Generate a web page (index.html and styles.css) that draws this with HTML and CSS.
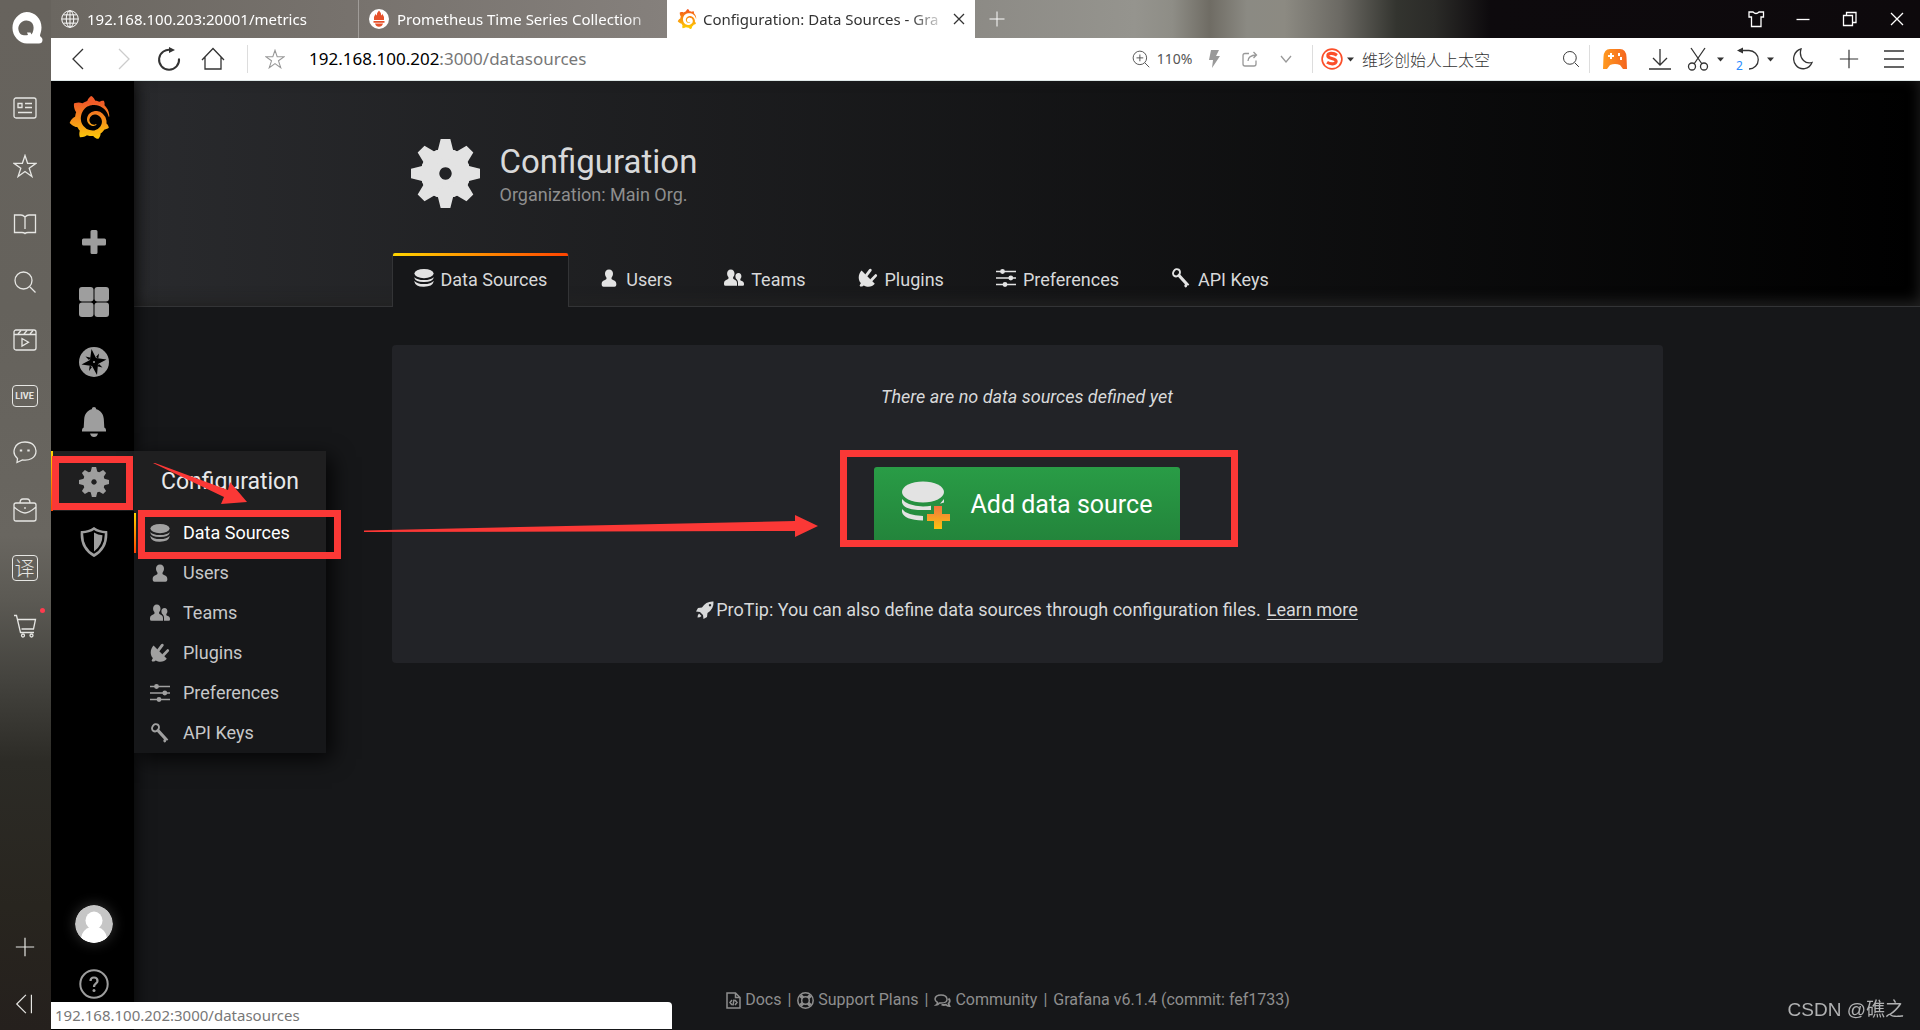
FILE: index.html
```html
<!DOCTYPE html>
<html lang="en">
<head>
<meta charset="utf-8">
<meta name="viewport" content="width=device-width, initial-scale=1">
<title>Configuration: Data Sources - Grafana</title>
<link rel="stylesheet" href="styles.css">
</head>
<body>
<svg class="sprite" aria-hidden="true">
  <defs>
    <linearGradient id="g-logo" x1="0" y1="0" x2="0" y2="1"><stop offset="0.15" stop-color="#f05a28"/><stop offset="1" stop-color="#fbca0a"/></linearGradient>
    <linearGradient id="g-plus" x1="0" y1="0" x2="0" y2="1"><stop offset="0" stop-color="#f2753f"/><stop offset="1" stop-color="#fbc20f"/></linearGradient>
    <linearGradient id="g-pad" x1="0" y1="0" x2="1" y2="0"><stop offset="0" stop-color="#ff9a1f"/><stop offset="1" stop-color="#f4651f"/></linearGradient>
    <path id="tooth" d="M43 0H57L61 16Q65 17 67 19L50 34L33 19Q35 17 39 16Z"/>
  </defs>
  <symbol id="logo" viewBox="0 0 24 24"><path d="M23.02 10.59a8.578 8.578 0 0 0-.862-3.034 8.911 8.911 0 0 0-1.789-2.445c.337-1.342-.413-2.505-.413-2.505-1.292-.08-2.113.4-2.416.62-.052-.02-.102-.044-.154-.064-.22-.089-.446-.172-.677-.247-.231-.073-.47-.14-.711-.197a9.867 9.867 0 0 0-.875-.161C14.557.753 12.94 0 12.94 0c-1.804 1.145-2.147 2.744-2.147 2.744l-.018.093c-.098.029-.2.057-.298.088-.138.042-.275.094-.413.143-.138.055-.275.107-.41.166a8.869 8.869 0 0 0-1.557.87l-.063-.029c-2.497-.955-4.716.195-4.716.195-.203 2.658.996 4.33 1.235 4.636a11.608 11.608 0 0 0-.607 2.635C1.636 12.677.953 15.014.953 15.014c1.926 2.214 4.171 2.351 4.171 2.351.003-.002.006-.002.006-.005.285.509.615.994.986 1.446.156.19.32.371.488.548-.704 2.009.099 3.68.099 3.68 2.144.08 3.553-.937 3.849-1.173a9.784 9.784 0 0 0 3.164.501h.08l.055-.003.107-.002.103-.005.003.002c1.01 1.44 2.788 1.646 2.788 1.646 1.264-1.332 1.337-2.653 1.337-2.94v-.058c0-.02-.003-.039-.003-.06.265-.187.52-.387.758-.6a7.875 7.875 0 0 0 1.415-1.7c1.43.083 2.437-.885 2.437-.885-.236-1.49-1.085-2.216-1.264-2.354l-.018-.013-.016-.013a.217.217 0 0 1-.031-.02c.008-.092.016-.18.02-.27.011-.162.016-.323.016-.48v-.253l-.005-.098-.008-.135a1.891 1.891 0 0 0-.01-.13c-.003-.042-.008-.083-.013-.125l-.016-.124-.018-.122a6.215 6.215 0 0 0-2.032-3.73 6.015 6.015 0 0 0-3.222-1.46 6.292 6.292 0 0 0-.85-.048l-.107.002h-.063l-.044.003-.104.008a4.777 4.777 0 0 0-3.335 1.695c-.332.4-.592.84-.768 1.297a4.594 4.594 0 0 0-.312 1.817l.003.091c.005.055.007.11.013.164a3.615 3.615 0 0 0 .698 1.82 3.53 3.53 0 0 0 1.827 1.282c.33.098.66.14.971.137.039 0 .078 0 .114-.002l.063-.003c.02 0 .041-.003.062-.003.034-.002.065-.007.099-.01.007 0 .018-.003.028-.003l.031-.005.06-.008a1.18 1.18 0 0 0 .112-.02c.036-.008.072-.013.109-.024a2.634 2.634 0 0 0 .914-.415c.028-.02.056-.041.085-.065a.248.248 0 0 0 .039-.35.244.244 0 0 0-.309-.06l-.078.042c-.09.044-.184.083-.283.116a2.476 2.476 0 0 1-.475.096c-.028.003-.054.006-.083.006l-.083.002c-.026 0-.054 0-.08-.002l-.102-.006h-.012l-.024.006c-.016-.003-.031-.003-.044-.006-.031-.002-.06-.007-.091-.01a2.59 2.59 0 0 1-.724-.213 2.557 2.557 0 0 1-.667-.438 2.52 2.52 0 0 1-.805-1.475 2.306 2.306 0 0 1-.029-.444l.006-.122v-.023l.002-.031c.003-.021.003-.04.005-.06a3.163 3.163 0 0 1 1.352-2.29 3.12 3.12 0 0 1 .937-.43 2.946 2.946 0 0 1 .776-.101h.06l.07.002.045.003h.026l.07.005a4.041 4.041 0 0 1 1.635.49 3.94 3.94 0 0 1 1.602 1.662 3.77 3.77 0 0 1 .397 1.414l.005.076.003.075c.002.026.002.05.002.075 0 .024.003.052 0 .07v.065l-.002.073-.008.174a6.195 6.195 0 0 1-.08.639 5.1 5.1 0 0 1-.267.927 5.31 5.31 0 0 1-.624 1.13 5.052 5.052 0 0 1-3.237 2.014 4.82 4.82 0 0 1-.649.066l-.039.003h-.287a6.607 6.607 0 0 1-1.716-.265 6.776 6.776 0 0 1-3.4-2.274 6.75 6.75 0 0 1-.746-1.15 6.616 6.616 0 0 1-.714-2.596l-.005-.083-.002-.02v-.056l-.003-.073v-.096l-.003-.104v-.07l.003-.163c.008-.22.026-.45.054-.678a8.707 8.707 0 0 1 .28-1.355c.128-.444.286-.872.473-1.277a7.04 7.04 0 0 1 1.456-2.1 5.925 5.925 0 0 1 .953-.763c.169-.111.343-.213.524-.306.089-.05.182-.091.273-.135.047-.02.093-.042.138-.062a7.177 7.177 0 0 1 .714-.267l.145-.045c.049-.015.098-.026.148-.041.098-.029.197-.052.296-.076.049-.013.1-.02.15-.033l.15-.032.151-.028.076-.013.075-.01.153-.024c.057-.01.114-.013.171-.023l.169-.021c.036-.003.073-.008.106-.01l.073-.008.036-.003.042-.002c.057-.003.114-.008.171-.01l.086-.006h.023l.037-.003.145-.007a7.999 7.999 0 0 1 1.708.125 7.917 7.917 0 0 1 2.048.68 8.253 8.253 0 0 1 1.672 1.09l.09.077.089.078c.06.052.114.107.171.159.057.052.112.106.166.16.052.055.107.107.159.164a8.671 8.671 0 0 1 1.41 1.978c.012.026.028.052.04.078l.04.078.075.156c.023.051.05.1.07.153l.065.15a8.848 8.848 0 0 1 .45 1.34.19.19 0 0 0 .201.142.186.186 0 0 0 .172-.184c.01-.246.002-.532-.024-.856z"/></symbol>
  <symbol id="gear" viewBox="0 0 100 100">
    <path fill-rule="evenodd" d="M50 14a36 36 0 1 0 .01 0ZM50 41a9 9 0 1 1-.01 0Z"/>
    <use href="#tooth"/><use href="#tooth" transform="rotate(45 50 50)"/><use href="#tooth" transform="rotate(90 50 50)"/><use href="#tooth" transform="rotate(135 50 50)"/><use href="#tooth" transform="rotate(180 50 50)"/><use href="#tooth" transform="rotate(225 50 50)"/><use href="#tooth" transform="rotate(270 50 50)"/><use href="#tooth" transform="rotate(315 50 50)"/>
  </symbol>
  <symbol id="db" viewBox="0 0 20 20"><ellipse cx="10" cy="5.6" rx="9.6" ry="4.6"/><path d="M.4 9.2Q3 12 10 12T19.600 9.200V10Q18.500 13.900 10 14T.400 10ZM.400 12.900Q3 16 10 16T19.600 12.900V13.800Q18.500 18.600 10 18.800T.400 13.800Z"/></symbol>
  <symbol id="user" viewBox="0 0 20 20"><path d="M10 1.500c2.600 0 4 1.900 4 4.300 0 1.600-.6 2.700-1.200 3.500-.4.600-.5 1.900.2 2.300 2 .9 4.300 1.600 4.300 4.300V17q0 1.800-1.800 1.800h-11Q2.700 18.800 2.700 17v-1.100c0-2.700 2.300-3.400 4.300-4.300.7-.4.600-1.700.2-2.300C6.600 8.500 6 7.400 6 5.800c0-2.400 1.400-4.300 4-4.300z"/></symbol>
  <symbol id="team" viewBox="0 0 20 20"><path d="M6.800 1.500c2.400 0 3.700 1.700 3.700 4 0 1.500-.5 2.600-1.100 3.300-.4.600-.5 1.800.1 2.200 1.900.9 3.500 1.500 3.500 4v2.700H1.500Q0 17.700 0 16.200V15c0-2.500 2.200-3.100 4.100-4 .6-.4.500-1.600.1-2.200-.6-.7-1.100-1.800-1.100-3.300 0-2.300 1.300-4 3.700-4z"/><path d="M14.500 5c2 0 2.900 1.400 2.900 3.200 0 1.200-.4 2-.9 2.600-.3.500-.3 1.400.2 1.700 1.500.7 3.300 1.200 3.300 3.200v.8q0 1.200-1.200 1.200H14V15c0-2-.8-3.200-2-4.200-.3-.6-.6-1.500-.6-2.600C11.400 6.400 12.500 5 14.500 5z"/></symbol>
  <symbol id="plug" viewBox="0 0 20 20"><path d="M3.500 2.500 16.800 15.800c-2.300 3.200-7.400 4-11 1.700l-1.600 1.100-2-.2-.6-1 1.300-2.300C-.6 11.500.500 5.500 3.500 2.500Z"/><path d="M8.500 7.200 12.300 2.200M13.500 12 17.700 7.600" fill="none" stroke="currentColor" stroke-width="2.800" stroke-linecap="round"/></symbol>
  <symbol id="sliders" viewBox="0 0 20 20"><path d="M0 3.500H20M0 10H20M0 16.500H20" stroke="currentColor" stroke-width="1.700"/><circle cx="6.500" cy="3.500" r="2.400"/><circle cx="14.800" cy="10" r="2.400"/><circle cx="9" cy="16.500" r="2.400"/></symbol>
  <symbol id="key" viewBox="0 0 20 20"><ellipse cx="5.500" cy="4.800" rx="3.200" ry="3.800" transform="rotate(35 5.500 4.800)" fill="none" stroke="currentColor" stroke-width="2"/><path d="M7.300 7.200 9 6.300 18.300 16.400 17 17.700 16 17.300 15.900 18.900 14.300 19.600 13.200 18 13.900 16.300 7 8.700Z"/></symbol>
  <symbol id="carrot" viewBox="0 0 10 6"><path d="M0 0H10L5 6Z"/></symbol>
  <symbol id="star" viewBox="0 0 24 24"><path d="M12 1.500 14.600 9.300H23L16.200 14.200 18.900 22.500 12 17.500 5.100 22.500 7.800 14.200 1 9.300H9.400Z"/></symbol>
  <symbol id="lens" viewBox="0 0 24 24"><circle cx="10.500" cy="10.500" r="8.500"/><path d="M17 17 22.500 22.500"/></symbol>
  <symbol id="add" viewBox="0 0 24 24"><path d="M12 2V22M2 12H22"/></symbol>
</svg>

<div class="browser">
  <aside class="dock" aria-label="Browser side panel">
    <a class="brand" href="#" aria-label="Browser home"><svg width="32" height="32" viewBox="0 0 32 32"><path fill="#fff" fill-rule="evenodd" d="M15.500 0C24 0 30.500 6.500 30.500 15.500 30.500 19.500 29 22 29 23.500 29 25 31.500 25 31.500 28 31.500 30.500 30 31.500 28 31.500H16A15.500 15.800 0 0 1 15.500 0ZM15 8.500c-5 .5-8.500 5-7.500 9.500 1 5 5 6 9.500 5l-1-2.500 3.500 0 1 2C24.500 17 23 8 15 8.500Z"/></svg></a>
    <nav class="dock-list">
      <button aria-label="News"><svg class="line" viewBox="0 0 24 24"><rect x="1" y="2" width="22" height="20" rx="2"/><path d="M5 7.500H9V11.500H5ZM12 7.500H19M12 11.500H19M5 16.500H19"/></svg></button>
      <button aria-label="Favorites"><svg class="line"><use href="#star"/></svg></button>
      <button aria-label="Reading"><svg class="line" viewBox="0 0 24 24"><path d="M12 5Q10 3 8 3H1.500V20.500H9Q11 20.500 12 21.500 13 20.500 15 20.500H22.500V3H16Q14 3 12 5V17"/></svg></button>
      <button aria-label="Search"><svg class="line"><use href="#lens"/></svg></button>
      <button aria-label="Video"><svg class="line" viewBox="0 0 24 24"><rect x="1" y="2" width="22" height="20" rx="2"/><path d="M1 6.500H23M5 6 8 2.500M11 6 14 2.500M17 6 20 2.500M9 10.500V18L15.500 14.200Z"/></svg></button>
      <button class="badge-live" aria-label="Live">LIVE</button>
      <button aria-label="Chat"><svg class="line" viewBox="0 0 24 24"><path d="M4.500 18.500C-2 13 1 2 12 2 20 2 23 7 23 11 23 18 16 21 9.500 20L4 22.500Z"/><path d="M8 9.500V11.500M15.500 9.500V11.500" stroke-width="2.400"/></svg></button>
      <button aria-label="Toolbox"><svg class="line" viewBox="0 0 24 24"><path d="M3 5H21Q23 5 23 7V21Q23 23 21 23H3Q1 23 1 21V7Q1 5 3 5ZM7 5Q7 1 10 1H14Q17 1 17 5M1 9Q8 15 12 15T23 9M12 9V11"/></svg></button>
      <button class="badge-trans" aria-label="Translate">译</button>
      <button class="cart" aria-label="Shopping"><svg class="line" viewBox="0 0 24 24"><path d="M1 1.500H3.500L7.500 18.500H21M5 5.500H22.500L20.500 15H8.500"/><circle cx="10" cy="21.500" r="1.500"/><circle cx="18.500" cy="21.500" r="1.500"/></svg></button>
    </nav>
    <nav class="dock-foot">
      <button aria-label="Add panel"><svg class="line"><use href="#add"/></svg></button>
      <button aria-label="Collapse"><svg class="line" viewBox="0 0 24 24"><path d="M13 2 3 12 13 22M19 2V22"/></svg></button>
    </nav>
  </aside>

  <div class="window">
    <header class="tabstrip">
      <a class="btab" href="#"><svg width="18" height="18" viewBox="0 0 24 24" class="line"><circle cx="12" cy="12" r="11"/><ellipse cx="12" cy="12" rx="5" ry="11"/><path d="M12 1V23M1 12H23M3 6.500H21M3 17.500H21"/></svg><span class="btab-text">192.168.100.203:20001/metrics</span></a>
      <a class="btab" href="#"><svg width="20" height="20" viewBox="0 0 20 20"><circle cx="10" cy="10" r="10" fill="#fff"/><path fill="#e6522c" d="M10 1.500Q12.500 4 12.300 6.500 13.500 6 13.300 4.500 15.500 7.500 15 11H5Q4.500 7.500 6.700 4.500 6.500 6 7.700 6.500 7.500 4 10 1.500ZM4.500 12H15.500V13.700H4.500ZM6 14.600H14Q13 17.800 10 17.800T6 14.600Z"/></svg><span class="btab-text">Prometheus Time Series Collection</span></a>
      <a class="btab active" href="#" aria-current="page"><svg width="20" height="20" fill="url(#g-fav)"><defs><linearGradient id="g-fav" x1="0" y1="0" x2="0" y2="1"><stop offset="0" stop-color="#f4511e"/><stop offset="1" stop-color="#ffd400"/></linearGradient></defs><use href="#logo"/></svg><span class="btab-text">Configuration: Data Sources - Gra</span><svg class="line" width="12" height="12" viewBox="0 0 12 12"><path d="M1 1 11 11M11 1 1 11"/></svg></a>
      <button class="newtab" aria-label="New tab"><svg class="line" width="18" height="18"><use href="#add"/></svg></button>
      <div class="win-buttons">
        <button aria-label="Skins"><svg class="line" viewBox="0 0 18 18"><path d="M2 2H6Q9 5 12 2H16.500V7H14V16.500H4.500V7H2Z"/></svg></button>
        <button aria-label="Minimize"><svg class="line" viewBox="0 0 18 18"><path d="M2.500 9.500H15.500"/></svg></button>
        <button aria-label="Restore"><svg class="line" viewBox="0 0 18 18"><path d="M2.500 5.500H11.500V15.500H2.500ZM5.500 5V2.500H15V12.500H12"/></svg></button>
        <button aria-label="Close"><svg class="line" viewBox="0 0 18 18"><path d="M3 3 15 15M15 3 3 15"/></svg></button>
      </div>
    </header>

    <div class="toolbar">
      <button class="w46" aria-label="Back"><svg class="line" width="24" height="24" viewBox="0 0 24 24"><path d="M17 2 7 12 17 22"/></svg></button>
      <button class="w46 dim" aria-label="Forward"><svg class="line" width="24" height="24" viewBox="0 0 24 24"><path d="M7 2 17 12 7 22"/></svg></button>
      <button class="w44" aria-label="Reload"><svg class="line bold" width="24" height="24" viewBox="0 0 24 24"><path d="M14.500 3A10 10 0 1 0 22 11.500"/><path fill="currentColor" stroke="none" d="M12 0 18 3 12 6Z"/></svg></button>
      <button class="w44" aria-label="Home"><svg class="line" width="24" height="24" viewBox="0 0 24 24"><path d="M1 13 12 1.500 23 13M4 10V22H20V10"/></svg></button>
      <span class="rule gap-left"></span>
      <button class="w54 soft" aria-label="Bookmark"><svg class="line" width="20" height="20"><use href="#star"/></svg></button>
      <div class="url" role="textbox" aria-label="Address"><span>192.168.100.202</span>:3000/datasources</div>
      <button class="zoom"><svg class="line" width="18" height="18" viewBox="0 0 24 24"><circle cx="10.500" cy="10.500" r="9"/><path d="M17 17 23 23M6 10.500H15M10.500 6V15"/></svg>110%</button>
      <button class="w36 soft" aria-label="Fast mode"><svg width="12" height="18" viewBox="0 0 12 18" fill="currentColor"><path d="M3 0H11L8 6H12L4 18 5 10H1Z"/></svg></button>
      <button class="w36 soft" aria-label="Share"><svg class="line" width="16" height="16" viewBox="0 0 16 16"><path d="M7 2.500H3Q1 2.500 1 4.500V13Q1 15 3 15H12Q14 15 14 13V9.500M6 10Q6 4.500 14.500 4M11.500 1 14.500 4 11.500 7"/></svg></button>
      <button class="w36 soft" aria-label="More sites"><svg class="line" width="12" height="8" viewBox="0 0 12 8"><path d="M1 1 6 7 11 1"/></svg></button>
      <form class="search">
        <button type="button" class="engine" aria-label="Search engine"><svg width="22" height="22" viewBox="0 0 20 20"><circle cx="10" cy="10" r="9" fill="none" stroke="#fb4f2a" stroke-width="1.500"/><path d="M14.500 6.500C11 4 6 4.500 6.200 7.300 6.500 10 13.800 9 13.800 12.200 13.500 15 8.500 15 5.500 13" fill="none" stroke="#fb4f2a" stroke-width="2.800"/></svg><svg class="caret"><use href="#carrot"/></svg></button>
        <input type="search" aria-label="Web search" value="维珍创始人上太空">
        <button type="button" class="w36" aria-label="Go"><svg class="line" width="18" height="18"><use href="#lens"/></svg></button>
      </form>
      <button class="w50" aria-label="Games"><svg width="24" height="20" viewBox="0 0 24 20"><path fill="url(#g-pad)" d="M7 0H17Q23 0 23.500 8L24 20H20L17 16Q12 14 7 16L4 20H0L.500 8Q1 0 7 0Z"/><path fill="#fff" d="M7 4H9V6H11V8H9V10H7V8H5V6H7ZM15 4h2v3h-2ZM17 8h2v3h-2Z"/></svg></button>
      <button class="w40" aria-label="Downloads"><svg class="line" width="22" height="22" viewBox="0 0 22 22"><path d="M11 1V17M4 10 11 17 18 10M0 21H22"/></svg></button>
      <button class="w50" aria-label="Snip"><svg class="line" width="22" height="24" viewBox="0 0 22 24"><path d="M4 1 15 17M18 1 7 17"/><circle cx="5" cy="19.500" r="3.500"/><circle cx="17" cy="19.500" r="3.500"/></svg><svg class="caret"><use href="#carrot"/></svg></button>
      <button class="w50 undo" aria-label="Reopen closed tabs"><span>2</span><svg class="line" width="22" height="24" viewBox="0 0 22 24"><path d="M2 3.500H12A9 9 0 0 1 12 22"/><path fill="currentColor" stroke="none" d="M0 3.500 6 .500V6.500Z"/></svg><svg class="caret"><use href="#carrot"/></svg></button>
      <button class="w46" aria-label="Night mode"><svg class="line" width="20" height="22" viewBox="0 0 20 22"><path d="M8 1A9.500 10 0 1 0 19 14.500Q14 16 10.500 12.500 6 8 8 1Z"/></svg></button>
      <button class="w46" aria-label="Add extension"><svg class="line" width="22" height="22"><use href="#add"/></svg></button>
      <button class="w44" aria-label="Menu"><svg class="line" width="20" height="18" viewBox="0 0 20 18"><path d="M0 1H20M0 9H20M0 17H20"/></svg></button>
    </div>

    <div class="app">
      <nav class="sidemenu" aria-label="Grafana">
        <a class="home" href="#" aria-label="Home"><svg width="43" height="43" fill="url(#g-logo)"><use href="#logo"/></svg></a>
        <ul class="side-list">
          <li><a href="#" aria-label="Create"><svg viewBox="0 0 24 24"><path d="M8.500 1.500Q8.500 0 10 0H14Q15.500 0 15.500 1.500V8.500H22.500Q24 8.500 24 10V14Q24 15.500 22.500 15.500H15.500V22.500Q15.500 24 14 24H10Q8.500 24 8.500 22.500V15.500H1.500Q0 15.500 0 14V10Q0 8.500 1.500 8.500H8.500Z"/></svg></a></li>
          <li><a href="#" aria-label="Dashboards"><svg class="big" viewBox="0 0 30 30"><rect width="14.500" height="14.500" rx="3"/><rect x="15.500" width="14.500" height="14.500" rx="3"/><rect y="15.500" width="14.500" height="14.500" rx="3"/><rect x="15.500" y="15.500" width="14.500" height="14.500" rx="3"/></svg></a></li>
          <li><a href="#" aria-label="Explore"><svg class="big" viewBox="0 0 30 30"><circle cx="15" cy="15" r="15"/><path fill="#000" d="M12.500 2 17 11 27.500 12.500 19 17 18 28 13 19 2.500 17.500 11 13Z"/><path fill="#000" d="M20 6.500 19.300 11.500 17 10ZM23.500 20.500 18 19.300 20 17ZM10 24 10.700 18.500 13 20ZM6.500 9.500 12 10.700 10 13Z"/><circle cx="15" cy="15" r="1"/></svg></a></li>
          <li><a href="#" aria-label="Alerting"><svg class="big" viewBox="0 0 30 30"><path d="M15 0Q17 0 17.300 2.200C22 3.500 24.500 7.500 24.800 12L25.300 20.500Q27 21 27 23V24.500H3V23Q3 21 4.700 20.500L5.200 12C5.500 7.500 8 3.500 12.700 2.200Q13 0 15 0ZM11 26.500H19Q18 30 15 30T11 26.500Z"/></svg></a></li>
          <li class="open"><a href="#" aria-label="Configuration"><svg class="big"><use href="#gear"/></svg></a>
            <div class="flyout">
              <h2>Configuration</h2>
              <ul>
                <li class="current"><a href="#"><svg><use href="#db"/></svg>Data Sources</a></li>
                <li><a href="#"><svg><use href="#user"/></svg>Users</a></li>
                <li><a href="#"><svg><use href="#team"/></svg>Teams</a></li>
                <li><a href="#"><svg><use href="#plug"/></svg>Plugins</a></li>
                <li><a href="#"><svg><use href="#sliders"/></svg>Preferences</a></li>
                <li><a href="#"><svg><use href="#key"/></svg>API Keys</a></li>
              </ul>
            </div>
          </li>
          <li><a href="#" aria-label="Server Admin"><svg class="big" viewBox="0 0 30 30"><path d="M15 1.500Q20 5 27 5.200 28 21 15 28.500 2 21 3 5.200 10 5 15 1.500Z" fill="none" stroke="currentColor" stroke-width="2.600"/><path d="M15 5.500Q19 8 23.500 8.300 23.500 18.500 15 24.500Z"/></svg></a></li>
        </ul>
        <ul class="side-foot">
          <li><a href="#" aria-label="Profile"><svg class="avatar" viewBox="0 0 38 38"><circle cx="19" cy="19" r="19" fill="#c6c6c6"/><ellipse cx="19" cy="15.500" rx="8.500" ry="9" fill="#fff"/><path fill="#fff" d="M15 22H23Q31 25 32 33 19 43 6 33 7 25 15 22Z"/></svg></a></li>
          <li><a href="#" aria-label="Help"><svg class="big" viewBox="0 0 30 30"><circle cx="15" cy="15" r="13.700" fill="none" stroke="currentColor" stroke-width="2"/><path d="M11.500 12Q11.500 8.500 15 8.500T18.500 12C18.500 14.500 15 14.500 15 18" fill="none" stroke="currentColor" stroke-width="2.200"/><circle cx="15" cy="21.500" r="1.500"/></svg></a></li>
        </ul>
      </nav>

      <main class="page">
        <header class="page-header">
          <div class="container">
            <div class="heading">
              <svg><use href="#gear"/></svg>
              <div>
                <h1>Configuration</h1>
                <p>Organization: Main Org.</p>
              </div>
            </div>
            <nav class="tabs">
              <a class="selected" href="#"><svg><use href="#db"/></svg>Data Sources</a>
              <a href="#"><svg><use href="#user"/></svg>Users</a>
              <a href="#"><svg><use href="#team"/></svg>Teams</a>
              <a href="#"><svg><use href="#plug"/></svg>Plugins</a>
              <a href="#"><svg><use href="#sliders"/></svg>Preferences</a>
              <a href="#"><svg><use href="#key"/></svg>API Keys</a>
            </nav>
          </div>
        </header>
        <section class="container">
          <div class="empty">
            <p class="empty-title">There are no data sources defined yet</p>
            <button class="cta"><svg viewBox="0 0 48 48"><ellipse cx="21" cy="11" rx="21" ry="10.500" fill="#e3e3e3"/><path fill="#e3e3e3" d="M0 18Q5 25 21 25.500 26 25.500 29 24.700V29H25Q2 30 0 21.500ZM42 18V21.500L38 22.800ZM0 28Q4 34 21 35V39.500Q2 39 0 31Z"/><path fill="url(#g-plus)" d="M32 25H40V33H48V40H40V48H32V40H25V33H32Z"/></svg>Add data source</button>
            <p class="tip"><svg width="18" height="18" viewBox="0 0 18 18"><path fill="currentColor" fill-rule="evenodd" d="M17.500 .500Q18 8 11.500 12L11 16 7.500 18 7 14 4 11 0 10.500 2 7 6 6.500Q10 0 17.500 .500ZM14 3a1.200 1.200 0 1 0 .01 0ZM3 12.500Q1.500 14 1.500 16.500 4 16.500 5.500 15Z"/></svg>ProTip: You can also define data sources through configuration files. <a href="#">Learn more</a></p>
          </div>
        </section>
        <footer class="footer">
          <a href="#"><svg width="15" height="17" viewBox="0 0 15 17"><path d="M1 1H9.500L14 5.500V16H1ZM9.500 1V5.500H14M6 8 4 10.500 6 13M9 8 11 10.500 9 13M8 7.500 7 13.500"/></svg>Docs</a><span>|</span>
          <a href="#"><svg width="17" height="17" viewBox="0 0 17 17"><circle cx="8.500" cy="8.500" r="7.700"/><circle cx="8.500" cy="8.500" r="3.800"/><path stroke-width="3.500" d="M3.500 3.500 5.800 5.800M13.500 3.500 11.200 5.800M3.500 13.500 5.800 11.200M13.500 13.500 11.200 11.200"/></svg>Support Plans</a><span>|</span>
          <a href="#"><svg width="17" height="17" viewBox="0 0 17 17"><path d="M3.500 10.500Q1 9 1 7 1.500 3 7 3T13 7 7 11L5.500 11Q4 13 2 13 3.500 12 3.500 10.500Z"/><path stroke-width="1.800" d="M14.500 6.500Q17 9 14.500 11.700L15.500 14Q13 14 12 12.700 10 13.300 7.500 12.700"/></svg>Community</a><span>|</span>
          <a href="#">Grafana v6.1.4 (commit: fef1733)</a>
        </footer>
      </main>
    </div>
  </div>
</div>

<div class="status">192.168.100.202:3000/datasources</div>
<div class="watermark">CSDN @礁之</div>

<div class="marks" aria-hidden="true">
  <span class="box box-gear"></span>
  <span class="box box-menu"></span>
  <span class="box box-cta"></span>
  <svg class="arrow-a" width="94" height="42" viewBox="0 0 94 42"><path d="M0 0 2 0 75 27 77 19 94 39 68 41 71 34Z"/></svg>
  <svg class="arrow-b" width="454" height="22" viewBox="0 0 454 22"><path d="M0 15.500 431 6V0L454 11 431 22V16L0 17Z"/></svg>
</div>
</body>
</html>
```

FILE: styles.css
```css
* { box-sizing: border-box; }
body {
  margin: 0;
  background: #161719;
  color: #d8d9da;
  font-family: Roboto, "Noto Sans CJK SC", sans-serif;
  font-size: 18px;
  line-height: 26px;
}
ul { list-style: none; margin: 0; padding: 0; }
h1, h2, p { margin: 0; font-weight: 400; }
a { color: inherit; text-decoration: none; }
button { border: 0; padding: 0; background: none; color: inherit; font: inherit; display: flex; align-items: center; justify-content: center; }
svg { flex: none; }
.sprite { position: absolute; width: 0; height: 0; }
.line { fill: none; stroke: currentColor; stroke-width: 1.3; }
.line.bold { stroke-width: 2; }

/* browser frame */
.browser { display: grid; grid-template-columns: 51px 1fr; min-height: 100vh; }
.window { display: flex; flex-direction: column; min-width: 0; }
.dock {
  display: flex; flex-direction: column; align-items: center;
  padding: 12px 2px 13px 0;
  color: #e6e6e3;
  background: linear-gradient(180deg, #67635d 0, #65625c 30%, #696660 52%, #5c5a54 58%, #44433e 66%, #2c2b26 74%, #28251f 88%, #25201d 100%);
}
.brand { display: flex; padding-left: 5px; }
.dock-list { display: flex; flex-direction: column; align-items: center; justify-content: space-between; height: 544px; margin-top: 51px; }
.dock button { height: 26px; width: 26px; }
.dock .line { width: 24px; height: 24px; }
.dock .badge-live, .dock .badge-trans { border: 1px solid #e6e6e3; border-radius: 4px; }
.dock .badge-live { height: 22px; font-size: 9px; font-weight: 700; }
.dock .badge-trans { font-size: 20px; line-height: 20px; font-family: "Noto Sans CJK SC", sans-serif; font-weight: 300; }
.cart { position: relative; }
.cart::after { content: ""; position: absolute; right: -7px; top: -5px; width: 5px; height: 5px; border-radius: 50%; background: #ff3b4e; }
.dock-foot { margin-top: auto; display: flex; flex-direction: column; gap: 31px; }
.dock-foot .line { width: 22px; height: 22px; }

.tabstrip {
  display: flex; height: 38px;
  color: #fff;
  font: 15px/38px "Noto Sans", "Noto Sans CJK SC", sans-serif;
  background: linear-gradient(90deg, #6b6761 0, #77726d 16%, #85807c 33%, #8c8a85 49%, #95948e 58%, #8e8d86 60%, #6f6c64 62%, #8b8a83 64%, #8c8a82 66%, #6b6963 69%, #33342f 72%, #2b2b28 74%, #0d0a0d 77%, #0d090c 100%);
}
.btab { display: flex; align-items: center; gap: 8px; width: 308px; padding: 0 10px; border-right: 1px solid #a09c98; }
.btab:nth-child(2) { border-right: 0; padding-right: 0; }
.btab-text { flex: 1; min-width: 0; overflow: hidden; white-space: nowrap; mask-image: linear-gradient(90deg, #000 85%, transparent 100%); }
.btab.active { background: #fff; color: #333; border: 0; gap: 6px; }
.newtab { width: 44px; }
.win-buttons { display: flex; margin-left: auto; }
.win-buttons button { width: 47px; }
.win-buttons svg { width: 18px; height: 18px; }

.toolbar { display: flex; align-items: center; height: 43px; padding: 0 4px; background: #fff; color: #333; border-bottom: 1px solid #dfe8e8; }
.toolbar button { height: 42px; }
.w36 { width: 36px; }
.w40 { width: 40px; }
.w44 { width: 44px; }
.w46 { width: 46px; }
.w50 { width: 50px; gap: 8px; }
.w54 { width: 54px; }
.toolbar .dim { color: #ccc; }
.toolbar .soft { color: #999; }
.rule { width: 1px; height: 28px; background: #ddd; }
.gap-left { margin-left: 12px; }
.url { flex: 1; min-width: 0; margin-left: 7px; color: #777; white-space: nowrap; font: 17px/26px "Noto Sans", sans-serif; }
.url span { color: #000; }
.toolbar .zoom { width: 68px; gap: 7px; color: #555; font: 14px/20px "Noto Sans", sans-serif; }
.search { display: flex; align-items: center; width: 278px; height: 28px; margin-left: 8px; border: solid #ddd; border-width: 0 1px; padding-left: 8px; }
.engine { gap: 4px; }
.caret { width: 7px; height: 5px; fill: #333; }
.search input { flex: 1; min-width: 0; border: 0; outline: 0; padding: 0 8px; background: none; color: #333; font: 16px/24px "Noto Sans CJK SC", sans-serif; font-weight: 300; }
.undo { position: relative; }
.undo span { position: absolute; left: 6px; bottom: 8px; color: #2a8cff; font: 12px/12px "Noto Sans", sans-serif; }

/* Grafana */
.app { flex: 1; display: flex; overflow: hidden; background: #161719; }
.sidemenu { position: relative; z-index: 2; display: flex; flex-direction: column; width: 83px; padding: 15px 0 17px; background: #000; color: #9e9e9e; box-shadow: 0 0 16px rgba(0, 0, 0, .9); }
.home { display: flex; height: 115px; padding-left: 17px; }
.side-list li, .side-foot li { position: relative; }
.side-list > li > a, .side-foot > li > a { display: flex; align-items: center; justify-content: center; height: 60px; padding: 2px 0 0 2px; }
.sidemenu svg { width: 24px; height: 24px; fill: currentColor; }
.sidemenu .home svg { width: 43px; height: 43px; fill: url(#g-logo); }
.sidemenu .big { width: 30px; height: 30px; }
.sidemenu .avatar { width: 38px; height: 38px; border-radius: 50%; box-shadow: 0 0 14px #333; }
.side-foot { margin-top: auto; }
.side-list > .open { background: #1f1f20; }
.open::before, .current::before { content: ""; position: absolute; left: 0; top: 0; bottom: 0; width: 2px; background: linear-gradient(#ffd500, #ff4400); }
.flyout { position: absolute; left: 83px; top: 0; width: 192px; background: #161719; color: #c7c8c9; box-shadow: 6px 6px 20px rgba(0, 0, 0, .8); }
.flyout h2 { height: 62px; padding: 0 27px; background: #1f1f20; color: #e8e8ea; font-size: 23px; line-height: 62px; }
.flyout a { display: flex; align-items: center; gap: 13px; height: 40px; padding-left: 16px; }
.sidemenu .flyout svg { width: 20px; height: 20px; fill: #a0a0a0; color: #a0a0a0; }
.current { background: #1f1f20; color: #fff; }

.page { flex: 1; min-width: 0; display: flex; flex-direction: column; }
.container { width: 100%; max-width: 1271px; margin: 0 auto; }
.page-header { padding-top: 58px; border-bottom: 1px solid #333436; background: linear-gradient(90deg, #292a2d 0, #000 100%); box-shadow: inset 0 -4px 14px #222222; }
.heading { display: flex; gap: 20px; padding-left: 19px; height: 114px; }
.heading svg { width: 69px; height: 69px; fill: #e3e3e3; }
.heading h1 { margin-top: 3px; font-size: 33px; line-height: 40px; color: #d8d9da; }
.heading p { color: #8e8e8e; }
.tabs { display: flex; gap: 8px; margin-bottom: -1px; }
.tabs a { display: flex; align-items: center; gap: 7px; height: 54px; padding: 0 21px 2px; border: 1px solid transparent; border-bottom: 0; }
.tabs svg { width: 20px; height: 20px; margin-bottom: 4px; fill: #e3e3e3; color: #e3e3e3; }
.tabs .selected { position: relative; background: #161719; border-color: #333436; border-radius: 3px 3px 0 0; }
.selected::before { content: ""; position: absolute; left: 0; right: 0; top: -1px; height: 3px; border-radius: 2px 2px 0 0; background: linear-gradient(90deg, #ffd500, #ff4400); }

.empty { display: flex; flex-direction: column; align-items: center; margin-top: 38px; padding: 39px 20px 40px; border-radius: 4px; background: #222327; }
.empty-title { font-style: italic; }
.cta { margin: 57px 0 55px; height: 75px; padding: 0 28px; gap: 21px; border-radius: 3px; background: linear-gradient(#299c46, #23843b); color: #fff; font-size: 25px; }
.cta svg { width: 48px; height: 48px; }
.tip { display: flex; align-items: center; gap: 2px; }
.tip a { margin-left: 4px; text-decoration: underline; text-underline-offset: 3px; }
.footer { margin-top: auto; display: flex; justify-content: center; gap: 6px; padding: 40px 38px 17px 0; color: #8e8e8e; font-size: 16px; }
.footer a { display: flex; align-items: center; gap: 4px; }
.footer svg { fill: none; stroke: currentColor; stroke-width: 1.5; }

/* overlays */
.status { position: fixed; z-index: 3; left: 51px; bottom: 1px; width: 621px; height: 27px; padding-left: 4px; border-radius: 0 4px 0 0; background: #fff; color: #777; font: 15px/27px "Noto Sans", sans-serif; }
.watermark { position: fixed; z-index: 3; right: 16px; bottom: 7px; color: #b0b1b2; font: 19px/26px "Liberation Sans", "Noto Sans CJK SC", sans-serif; }
.marks { position: absolute; z-index: 4; left: 0; top: 0; pointer-events: none; }
.marks > * { position: absolute; fill: #fb3836; }
.box { border: 7px solid #fb3836; }
.box-gear { left: 52px; top: 456px; width: 81px; height: 54px; }
.box-menu { left: 138px; top: 510px; width: 203px; height: 49px; }
.box-cta { left: 840px; top: 450px; width: 398px; height: 97px; }
.arrow-a { left: 153px; top: 463px; }
.arrow-b { left: 364px; top: 515px; }
```
